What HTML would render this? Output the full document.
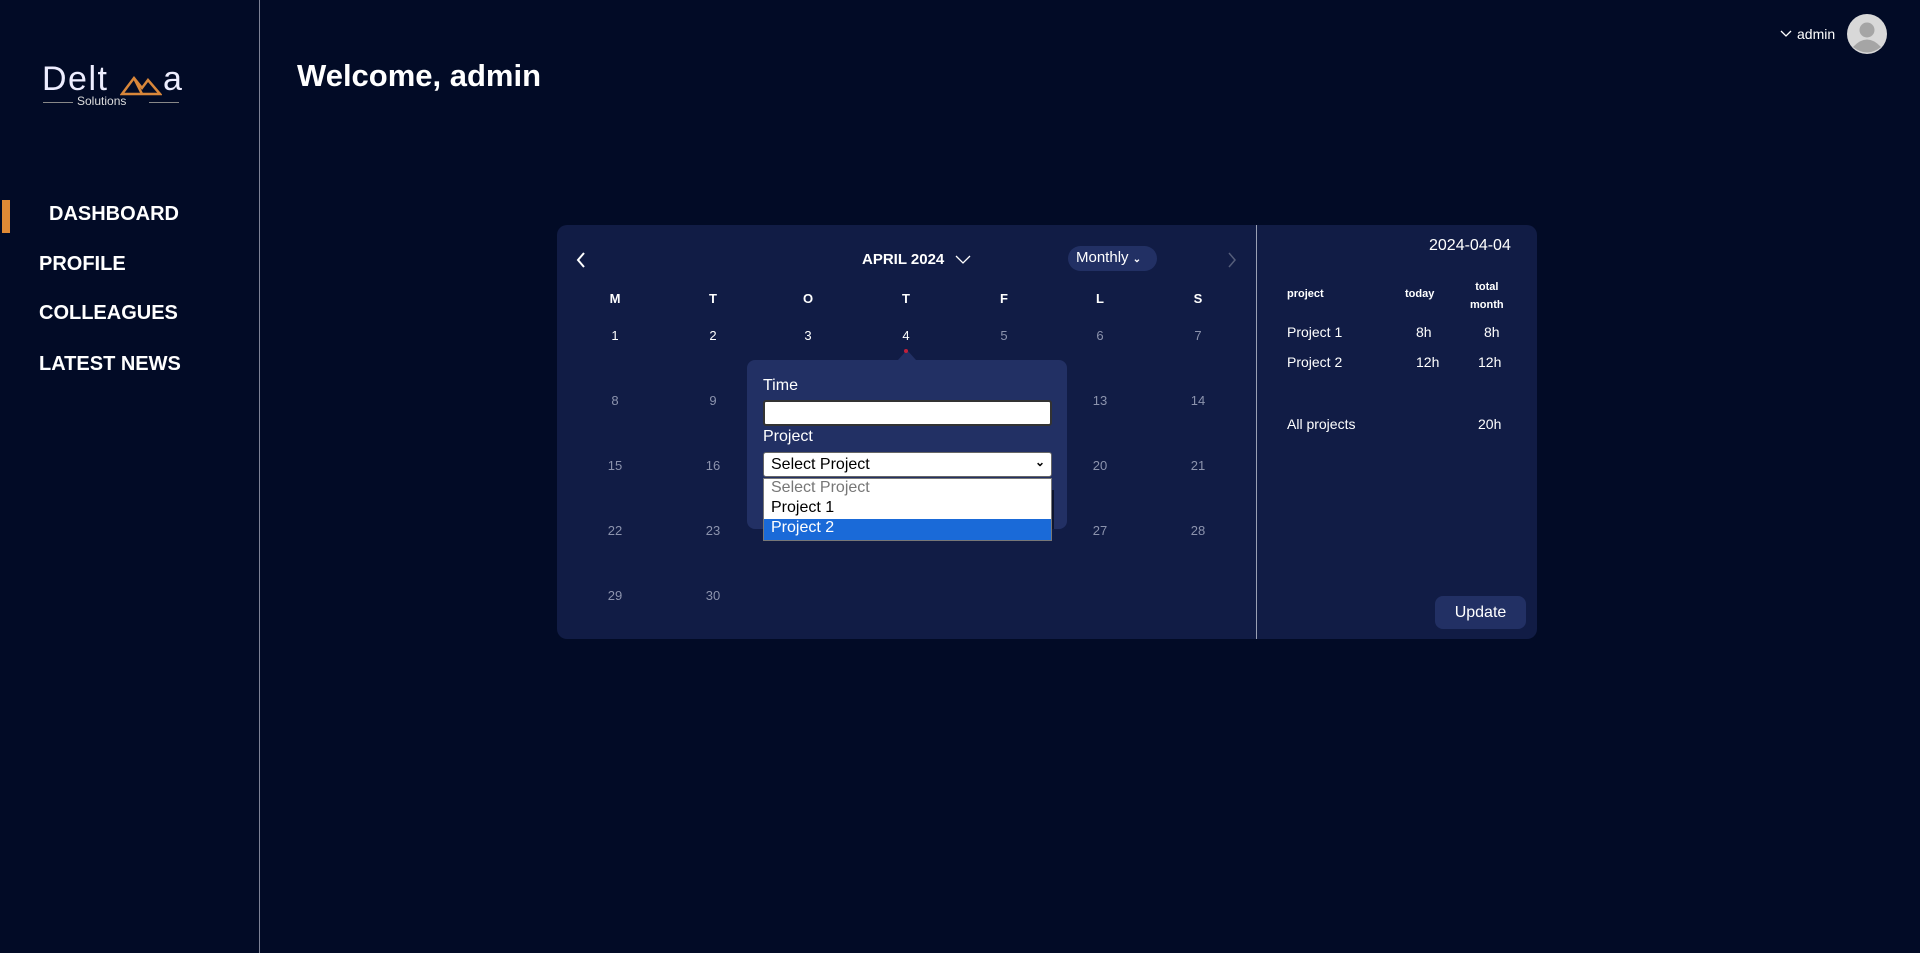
<!DOCTYPE html>
<html><head><meta charset="utf-8"><style>
*{margin:0;padding:0;box-sizing:border-box}
body{width:1920px;height:953px;background:#020b26;font-family:"Liberation Sans",sans-serif;color:#fff;position:relative;overflow:hidden}
.abs{position:absolute}
.side{left:259px;top:0;width:1px;height:953px;background:#7d8296}
.nav{font-weight:bold;font-size:20px;letter-spacing:0px;color:#fff}
.card{left:557px;top:225px;width:980px;height:414px;background:#111c45;border-radius:10px}
.div{left:1256px;top:225px;width:1px;height:414px;background:#9aa0b4}
.wd{font-weight:bold;font-size:13px;width:40px;text-align:center;transform:translateX(-20px)}
.d{font-size:13px;width:40px;text-align:center;transform:translateX(-20px);color:#8c93ad}
.w{color:#fff}
.pop{left:747px;top:360px;width:320px;height:169px;background:#223064;border-radius:8px}
.rt{font-size:14px}
</style></head><body>
<div class="abs side"></div>
<!-- logo -->
<div class="abs" style="left:42px;top:60px;font-size:34px;letter-spacing:1.5px;color:#eef">Delt</div>
<svg class="abs" style="left:120px;top:72px" width="42" height="24" viewBox="0 0 42 24"><path d="M2 22 L14 6 L22 16 L28 8 L40 22 Z" fill="none" stroke="#d9873a" stroke-width="2.5"/><path d="M14 6 L22 22" fill="none" stroke="#d9873a" stroke-width="2.5"/></svg>
<div class="abs" style="left:163px;top:60px;font-size:34px;color:#eef">a</div>
<div class="abs" style="left:43px;top:102px;width:30px;height:1px;background:#888"></div>
<div class="abs" style="left:77px;top:94px;font-size:12px;color:#ddd">Solutions</div>
<div class="abs" style="left:149px;top:102px;width:30px;height:1px;background:#888"></div>

<div class="abs" style="left:2px;top:200px;width:8px;height:33px;background:#e08a35"></div>
<div class="abs nav" style="left:49px;top:203px">DASHBOARD</div>
<div class="abs nav" style="left:39px;top:253px">PROFILE</div>
<div class="abs nav" style="left:39px;top:302px">COLLEAGUES</div>
<div class="abs nav" style="left:39px;top:353px">LATEST NEWS</div>

<div class="abs" style="left:297px;top:58px;font-size:31px;font-weight:bold">Welcome, admin</div>

<svg class="abs" style="left:1780px;top:30px" width="12" height="8"><path d="M1 1 L6 6 L11 1" stroke="#fff" fill="none" stroke-width="1.3"/></svg>
<div class="abs" style="left:1797px;top:26px;font-size:14px">admin</div>
<svg class="abs" style="left:1847px;top:14px" width="40" height="40" viewBox="0 0 40 40"><circle cx="20" cy="20" r="20" fill="#d8d8d8"/><circle cx="20" cy="16" r="7.5" fill="#a5a5a5"/><path d="M6 33 Q20 18 34 33 Q20 44 6 33Z" fill="#a5a5a5"/></svg>

<div class="abs card"></div>
<div class="abs div"></div>
<svg class="abs" style="left:576px;top:252px" width="10" height="16"><path d="M8 1 L2 8 L8 15" stroke="#fff" fill="none" stroke-width="2"/></svg>
<div class="abs" style="left:862px;top:251px;font-size:15px;font-weight:bold">APRIL 2024</div>
<svg class="abs" style="left:955px;top:255px" width="16" height="10"><path d="M1 1 L8 8 L15 1" stroke="#fff" fill="none" stroke-width="1.3"/></svg>
<div class="abs" style="left:1068px;top:246px;width:89px;height:25px;background:#223064;border-radius:13px;font-size:15px;padding:3px 0 0 8px">Monthly <span style="font-size:10px;font-weight:bold">&#8964;</span></div>
<svg class="abs" style="left:1227px;top:252px" width="10" height="16"><path d="M2 1 L8 8 L2 15" stroke="#555d7a" fill="none" stroke-width="1.5"/></svg>

<div class="abs wd" style="left:615px;top:291px">M</div>
<div class="abs wd" style="left:713px;top:291px">T</div>
<div class="abs wd" style="left:808px;top:291px">O</div>
<div class="abs wd" style="left:906px;top:291px">T</div>
<div class="abs wd" style="left:1004px;top:291px">F</div>
<div class="abs wd" style="left:1100px;top:291px">L</div>
<div class="abs wd" style="left:1198px;top:291px">S</div>

<div class="abs d w" style="left:615px;top:328px">1</div>
<div class="abs d w" style="left:713px;top:328px">2</div>
<div class="abs d w" style="left:808px;top:328px">3</div>
<div class="abs d w" style="left:906px;top:328px">4</div>
<div class="abs d" style="left:1004px;top:328px">5</div>
<div class="abs d" style="left:1100px;top:328px">6</div>
<div class="abs d" style="left:1198px;top:328px">7</div>
<div class="abs d" style="left:615px;top:393px">8</div>
<div class="abs d" style="left:713px;top:393px">9</div>
<div class="abs d" style="left:1100px;top:393px">13</div>
<div class="abs d" style="left:1198px;top:393px">14</div>
<div class="abs d" style="left:615px;top:458px">15</div>
<div class="abs d" style="left:713px;top:458px">16</div>
<div class="abs d" style="left:1100px;top:458px">20</div>
<div class="abs d" style="left:1198px;top:458px">21</div>
<div class="abs d" style="left:615px;top:523px">22</div>
<div class="abs d" style="left:713px;top:523px">23</div>
<div class="abs d" style="left:1100px;top:523px">27</div>
<div class="abs d" style="left:1198px;top:523px">28</div>
<div class="abs d" style="left:615px;top:588px">29</div>
<div class="abs d" style="left:713px;top:588px">30</div>

<div class="abs pop"></div>
<div class="abs" style="left:898px;top:350px;width:0;height:0;border-left:9px solid transparent;border-right:9px solid transparent;border-bottom:10px solid #223064"></div>
<div class="abs" style="left:904px;top:349px;width:4px;height:4px;border-radius:2px;background:#c0203a"></div>
<div class="abs" style="left:763px;top:377px;font-size:16px">Time</div>
<div class="abs" style="left:763px;top:400px;width:289px;height:26px;background:#fff;border:2px solid #333;border-radius:3px"></div>
<div class="abs" style="left:763px;top:428px;font-size:16px">Project</div>
<div class="abs" style="left:763px;top:452px;width:289px;height:25px;background:#fff;border:1px solid #666;border-radius:3px;color:#000;font-size:16px;padding:3px 0 0 7px">Select Project<span style="position:absolute;right:6px;top:2px;font-size:12px;font-weight:bold">&#8964;</span></div>
<div class="abs" style="left:1050px;top:490px;width:4px;height:39px;background:#0d1530"></div>
<div class="abs" style="left:763px;top:478px;width:289px;height:63px;background:#fff;border:1px solid #777;color:#000;font-size:16px">
<div style="height:20px;padding:0 7px;color:#777">Select Project</div>
<div style="height:20px;padding:0 7px">Project 1</div>
<div style="height:21px;padding:0 7px;background:#1a6ad8;color:#fff">Project 2</div>
</div>

<div class="abs" style="left:1429px;top:237px;font-size:16px">2024-04-04</div>
<div class="abs" style="left:1287px;top:288px;font-size:11px;font-weight:bold">project</div>
<div class="abs" style="left:1405px;top:288px;font-size:11px;font-weight:bold">today</div>
<div class="abs" style="left:1470px;top:278px;font-size:11px;font-weight:bold;text-align:center;line-height:18px">total<br>month</div>
<div class="abs rt" style="left:1287px;top:324px">Project 1</div>
<div class="abs rt" style="left:1416px;top:324px">8h</div>
<div class="abs rt" style="left:1484px;top:324px">8h</div>
<div class="abs rt" style="left:1287px;top:354px">Project 2</div>
<div class="abs rt" style="left:1416px;top:354px">12h</div>
<div class="abs rt" style="left:1478px;top:354px">12h</div>
<div class="abs rt" style="left:1287px;top:416px">All projects</div>
<div class="abs rt" style="left:1478px;top:416px">20h</div>
<div class="abs" style="left:1435px;top:596px;width:91px;height:33px;background:#223064;border-radius:8px;font-size:16px;text-align:center;line-height:33px">Update</div>
</body></html>
